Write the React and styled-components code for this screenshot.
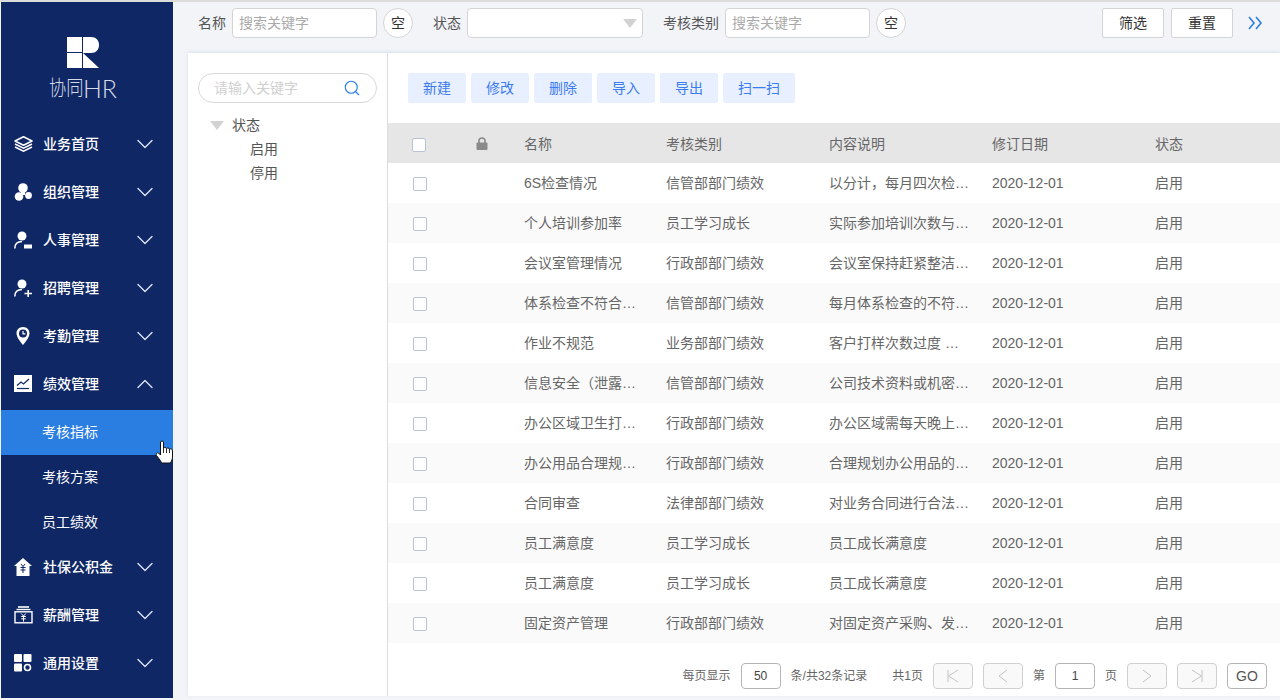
import React from "react";
import styled, { createGlobalStyle } from "styled-components";
import { ChevronDown, ChevronUp, Search } from "lucide-react";

const FONT = `"Liberation Sans", "Noto Sans CJK SC", sans-serif`;

const GlobalStyle = createGlobalStyle`
  html, body {
    margin: 0;
    padding: 0;
    height: 700px;
    overflow: hidden;
    background: #f2f4f8;
    font-family: ${FONT};
    line-height: 20px;
  }
  * { box-sizing: border-box; }
`;

const rows = [
  ["6S检查情况", "信管部部门绩效", "以分计，每月四次检…"],
  ["个人培训参加率", "员工学习成长", "实际参加培训次数与…"],
  ["会议室管理情况", "行政部部门绩效", "会议室保持赶紧整洁…"],
  ["体系检查不符合…", "信管部部门绩效", "每月体系检查的不符…"],
  ["作业不规范", "业务部部门绩效", "客户打样次数过度 …"],
  ["信息安全（泄露…", "信管部部门绩效", "公司技术资料或机密…"],
  ["办公区域卫生打…", "行政部部门绩效", "办公区域需每天晚上…"],
  ["办公用品合理规…", "行政部部门绩效", "合理规划办公用品的…"],
  ["合同审查", "法律部部门绩效", "对业务合同进行合法…"],
  ["员工满意度", "员工学习成长", "员工成长满意度"],
  ["员工满意度", "员工学习成长", "员工成长满意度"],
  ["固定资产管理", "行政部部门绩效", "对固定资产采购、发…"],
];

const IconLayers = () => (
  <svg width="20" height="16" viewBox="0 0 20 16" fill="none">
    <path d="M9.5 0.8 18 5 9.5 9.2 1 5Z" stroke="#fff" strokeWidth="1.6" strokeLinejoin="round" />
    <path d="M1 8 9.5 12.2 18 8M1 11 9.5 15.2 18 11" stroke="#fff" strokeWidth="1.5" />
  </svg>
);
const IconOrg = () => (
  <svg width="20" height="18" viewBox="0 0 20 18" fill="#fff">
    <circle cx="9" cy="5" r="4.8" />
    <circle cx="5" cy="13.5" r="4.3" />
    <circle cx="14.5" cy="12.5" r="3.4" />
    <rect x="7" y="8" width="4" height="4" />
  </svg>
);
const IconUserMinus = () => (
  <svg width="20" height="18" viewBox="0 0 20 18" fill="none">
    <circle cx="8" cy="5" r="4.5" fill="#fff" />
    <path d="M0.8 17.5C0.8 13 3.5 10.5 8 10.5" stroke="#fff" strokeWidth="1.5" />
    <rect x="10" y="13.5" width="8" height="4" fill="#fff" />
  </svg>
);
const IconUserPlus = () => (
  <svg width="20" height="18" viewBox="0 0 20 18" fill="none">
    <circle cx="8" cy="5" r="4.5" fill="#fff" />
    <path d="M0.8 17.5C0.8 13 3.5 10.5 8 10.5" stroke="#fff" strokeWidth="1.5" />
    <path d="M10.5 14.5H18M14.2 11V18" stroke="#fff" strokeWidth="1.6" />
  </svg>
);
const IconPin = () => (
  <svg width="20" height="18" viewBox="0 0 20 18">
    <path d="M9 0C4.6 0 2.5 3.2 2.5 6.3 2.5 10.5 7 15.5 9 18 11 15.5 15.5 10.5 15.5 6.3 15.5 3.2 13.4 0 9 0Z" fill="#fff" />
    <circle cx="9" cy="6.5" r="4" fill="#0f2765" />
    <path d="M9 4V6.8H11.4" stroke="#fff" strokeWidth="1.2" fill="none" />
  </svg>
);
const IconChart = () => (
  <svg width="20" height="18" viewBox="0 0 20 18">
    <rect x="0" y="0" width="18" height="17" fill="#fff" />
    <path d="M3 10.5 7 7 9.5 9 15 4" stroke="#0f2765" strokeWidth="1.2" fill="none" />
    <path d="M3 13.5H15" stroke="#0f2765" strokeWidth="1.2" />
  </svg>
);
const IconHouse = () => (
  <svg width="20" height="18" viewBox="0 0 20 18">
    <path d="M9 0 18 8H15.5V18H2.5V8H0Z" fill="#fff" />
    <path d="M7 6 9 8.5 11 6M6.5 9.5H11.5M6.5 12H11.5M9 8.5V15" stroke="#0f2765" strokeWidth="1" fill="none" />
  </svg>
);
const IconSalary = () => (
  <svg width="20" height="18" viewBox="0 0 20 18" fill="none">
    <path d="M4 1H15" stroke="#fff" strokeWidth="1.6" />
    <path d="M2.5 3.5H16.5" stroke="#fff" strokeWidth="1.4" />
    <rect x="1" y="5.8" width="17" height="11" stroke="#fff" strokeWidth="1.4" />
    <path d="M7.2 7.5 9.5 10 11.8 7.5M7.2 10.5H11.8M7.2 12.8H11.8M9.5 10V15.5" stroke="#fff" strokeWidth="1" />
  </svg>
);
const IconGrid = () => (
  <svg width="20" height="18" viewBox="0 0 20 18">
    <rect x="0" y="0" width="8" height="8" rx="1" fill="#fff" />
    <rect x="9.5" y="0" width="8" height="8" rx="1" fill="#fff" />
    <rect x="0" y="9.5" width="8" height="8" rx="1" fill="#fff" />
    <circle cx="13.5" cy="13.5" r="3" fill="none" stroke="#fff" strokeWidth="1.6" />
  </svg>
);

const Logo = () => (
  <svg width="32" height="32" viewBox="0 0 32 32">
    <rect x="0" y="0" width="15" height="15" fill="#fff" />
    <rect x="0" y="16" width="15" height="15" fill="#fff" />
    <path d="M16 0H24C29 0 32 3.5 32 8S29 16 24 16H16Z" fill="#fff" />
    <path d="M16 16 32 31H16Z" fill="#fff" />
  </svg>
);

const HandCursor = () => (
  <svg width="19" height="24" viewBox="0 0 19 24">
    <path
      d="M5.5 2C5.5 0.7 8.5 0.7 8.5 2V8C9.5 7.2 11 7.4 11.5 8.5 12.5 7.6 14 8 14.5 9 15.5 8.5 17.5 9 17.5 11V17C17.5 19 16.5 21 15.5 23H6.5C6 21 4.5 19.5 1.5 15.5 0.5 14 2 12 3.5 13L5.5 15Z"
      fill="#fff"
      stroke="#111"
      strokeWidth="1"
    />
    <path d="M8.5 8V13M11.5 8.5V13M14.5 9V13" stroke="#111" strokeWidth="0.9" />
  </svg>
);

const LockIcon = () => (
  <svg width="12" height="13" viewBox="0 0 12 13">
    <path d="M3 6V3.8C3 2 4.3 1 6 1S9 2 9 3.8V6" fill="none" stroke="#8a8a8a" strokeWidth="1.6" />
    <rect x="0.5" y="5.5" width="11" height="7.5" rx="1" fill="#8a8a8a" />
  </svg>
);

const ExpandGlyph = () => (
  <svg width="15" height="14" viewBox="0 0 15 14" fill="none" stroke="#2b7de9" strokeWidth="1.6">
    <path d="M1 1 6 7 1 13M8 1 13 7 8 13" />
  </svg>
);

// the four pager arrows share one little drawing
const NavGlyph = ({ d }) => (
  <svg width="20" height="18" viewBox="0 0 20 18" fill="none" stroke="#c4c4c4" strokeWidth="1">
    <path d={d} />
  </svg>
);

const menuBefore = [
  { label: "业务首页", icon: <IconLayers /> },
  { label: "组织管理", icon: <IconOrg /> },
  { label: "人事管理", icon: <IconUserMinus /> },
  { label: "招聘管理", icon: <IconUserPlus /> },
  { label: "考勤管理", icon: <IconPin /> },
];
const menuAfter = [
  { label: "社保公积金", icon: <IconHouse /> },
  { label: "薪酬管理", icon: <IconSalary /> },
  { label: "通用设置", icon: <IconGrid /> },
];

export default function App() {
  return (
    <>
      <GlobalStyle />
      <Page>
        <Sidebar>
          <Brand>
            <Logo />
            <BrandName>
              <BrandCjk>协同</BrandCjk>
              <BrandLatin>HR</BrandLatin>
            </BrandName>
          </Brand>
          {menuBefore.map((m) => (
            <MenuItem key={m.label}>
              <MenuIcon>{m.icon}</MenuIcon>
              <MenuLabel>{m.label}</MenuLabel>
              <ChevronDown size={28} strokeWidth={1.2} />
            </MenuItem>
          ))}
          <MenuItem>
            <MenuIcon>
              <IconChart />
            </MenuIcon>
            <MenuLabel>绩效管理</MenuLabel>
            <ChevronUp size={28} strokeWidth={1.2} />
          </MenuItem>
          <SubMenu>
            <SubItem $active>
              考核指标
              <CursorSpot>
                <HandCursor />
              </CursorSpot>
            </SubItem>
            <SubItem>考核方案</SubItem>
            <SubItem>员工绩效</SubItem>
          </SubMenu>
          {menuAfter.map((m) => (
            <MenuItem key={m.label}>
              <MenuIcon>{m.icon}</MenuIcon>
              <MenuLabel>{m.label}</MenuLabel>
              <ChevronDown size={28} strokeWidth={1.2} />
            </MenuItem>
          ))}
        </Sidebar>

        <Main>
          <FilterBar>
            <FilterLabel>名称</FilterLabel>
            <FilterInput placeholder="搜索关键字" />
            <ClearButton>空</ClearButton>
            <FilterLabel $ml={20}>状态</FilterLabel>
            <SelectBox>
              <Caret />
            </SelectBox>
            <FilterLabel $ml={20}>考核类别</FilterLabel>
            <FilterInput placeholder="搜索关键字" />
            <ClearButton>空</ClearButton>
            <FilterActions>
              <PlainButton>筛选</PlainButton>
              <PlainButton>重置</PlainButton>
              <ExpandIcon>
                <ExpandGlyph />
              </ExpandIcon>
            </FilterActions>
          </FilterBar>

          <Content>
            <TreePanel>
              <TreeSearch>
                <TreeInput placeholder="请输入关键字" />
                <Search size={18} color="#2b7de9" strokeWidth={1.5} />
              </TreeSearch>
              <TreeRoot>
                <TreeCaret />
                状态
              </TreeRoot>
              <TreeLeaf>启用</TreeLeaf>
              <TreeLeaf>停用</TreeLeaf>
            </TreePanel>

            <TablePanel>
              <Toolbar>
                <ToolButton>新建</ToolButton>
                <ToolButton>修改</ToolButton>
                <ToolButton>删除</ToolButton>
                <ToolButton>导入</ToolButton>
                <ToolButton>导出</ToolButton>
                <ToolButton $wide>扫一扫</ToolButton>
              </Toolbar>

              <HeadRow>
                <CheckCell>
                  <HeadCheck />
                </CheckCell>
                <LockCell>
                  <LockIcon />
                </LockCell>
                <Cell $w={142}>名称</Cell>
                <Cell $w={163}>考核类别</Cell>
                <Cell $w={163}>内容说明</Cell>
                <Cell $w={163}>修订日期</Cell>
                <Cell>状态</Cell>
              </HeadRow>
              {rows.map((r, i) => (
                <Row key={i} $odd={i % 2 === 1}>
                  <CheckCell>
                    <Check />
                  </CheckCell>
                  <LockCell />
                  <Cell $w={142}>{r[0]}</Cell>
                  <Cell $w={163}>{r[1]}</Cell>
                  <Cell $w={163}>{r[2]}</Cell>
                  <Cell $w={163}>2020-12-01</Cell>
                  <Cell>启用</Cell>
                </Row>
              ))}

              <Pager>
                <PagerText>每页显示</PagerText>
                <PageBox $mx={10}>50</PageBox>
                <PagerText>条/共32条记录</PagerText>
                <PagerText $ml={25}>共1页</PagerText>
                <PageNav $ml={10}>
                  <NavGlyph d="M5 3V15M15 3 5.5 9 15 15" />
                </PageNav>
                <PageNav $ml={10}>
                  <NavGlyph d="M14 3 6 9 14 15" />
                </PageNav>
                <PagerText $ml={10}>第</PagerText>
                <PageBox $mx={10}>1</PageBox>
                <PagerText>页</PagerText>
                <PageNav $ml={10}>
                  <NavGlyph d="M6 3 14 9 6 15" />
                </PageNav>
                <PageNav $ml={10}>
                  <NavGlyph d="M15 3V15M5 3 14.5 9 5 15" />
                </PageNav>
                <GoButton>GO</GoButton>
              </Pager>
            </TablePanel>
          </Content>
        </Main>
      </Page>
    </>
  );
}

const Page = styled.div`
  display: flex;
  width: 1280px;
  height: 700px;
  border-top: 2px solid #dcdcdc;
  padding-left: 1px;
  overflow: hidden;
`;

const Sidebar = styled.aside`
  width: 172px;
  height: 696px;
  background: #0f2765;
  color: #fff;
  flex-shrink: 0;
`;

const Brand = styled.div`
  height: 118px;
  padding: 35px 8px 0 0;
  display: flex;
  flex-direction: column;
  align-items: center;
`;

const BrandName = styled.div`
  display: flex;
  align-items: center;
  height: 24px;
  margin-top: 7px;
  color: #d5dae6;
  white-space: nowrap;
`;

const BrandCjk = styled.span`
  width: 34px;
  font-size: 21px;
  font-weight: 300;
  transform: scaleX(0.82);
  transform-origin: left center;
`;

const BrandLatin = styled.span`
  font-family: Lato, "Liberation Sans", sans-serif;
  font-size: 25px;
  font-weight: 300;
`;

const MenuItem = styled.div`
  display: flex;
  align-items: center;
  height: 48px;
  padding-left: 13px;
  color: #dfe3ee;
  font-size: 14px;
  svg {
    flex-shrink: 0;
  }
`;

const MenuIcon = styled.span`
  width: 29px;
  display: flex;
  align-items: center;
`;

const MenuLabel = styled.span`
  width: 88px;
  font-weight: 500;
  color: #fff;
`;

const SubMenu = styled.div`
  margin: 2px 0 -2px;
`;

const SubItem = styled.div`
  position: relative;
  height: 45px;
  line-height: 45px;
  padding-left: 41px;
  font-size: 14px;
  color: #fff;
  background: ${(p) => (p.$active ? "#2a7de1" : "transparent")};
`;

const CursorSpot = styled.span`
  position: absolute;
  left: 154px;
  top: 30px;
  line-height: 0;
  z-index: 2;
`;

const Main = styled.main`
  flex: 1;
  min-width: 0;
  display: flex;
  flex-direction: column;
`;

const FilterBar = styled.div`
  height: 51px;
  display: flex;
  align-items: center;
  padding: 0 0 9px 25px;
  font-size: 14px;
  color: #555;
`;

const FilterLabel = styled.span`
  margin-left: ${(p) => p.$ml || 0}px;
  margin-right: 6px;
  color: #555;
  white-space: nowrap;
`;

const FilterInput = styled.input`
  width: 145px;
  height: 30px;
  border: 1px solid #d4d4d4;
  border-radius: 4px;
  padding: 0 6px;
  font: 14px ${FONT};
  background: #fff;
  outline: none;
  &::placeholder {
    color: #aaa;
  }
`;

const ClearButton = styled.span`
  width: 30px;
  height: 30px;
  margin-left: 6px;
  border: 1px solid #d4d4d4;
  border-radius: 50%;
  background: #fff;
  color: #333;
  display: flex;
  align-items: center;
  justify-content: center;
  font-size: 14px;
`;

const SelectBox = styled.div`
  width: 176px;
  height: 30px;
  background: #fff;
  border: 1px solid #d4d4d4;
  border-radius: 4px;
  display: flex;
  align-items: center;
  justify-content: flex-end;
  padding-right: 5px;
`;

const Caret = styled.span`
  width: 0;
  height: 0;
  border-left: 7px solid transparent;
  border-right: 7px solid transparent;
  border-top: 9px solid #d2d2d2;
`;

const FilterActions = styled.div`
  margin-left: auto;
  display: flex;
  align-items: center;
  gap: 7px;
  padding-right: 17px;
`;

const PlainButton = styled.span`
  width: 62px;
  height: 30px;
  background: #fff;
  border: 1px solid #d4d4d4;
  border-radius: 2px;
  color: #333;
  display: flex;
  align-items: center;
  justify-content: center;
  font-size: 14px;
`;

const ExpandIcon = styled.span`
  display: flex;
  margin-left: 8px;
`;

const Content = styled.div`
  flex: 1;
  min-height: 0;
  margin-left: 15px;
  margin-bottom: 4px;
  display: flex;
  background: #fff;
  box-shadow: 0 -1px 3px rgba(190, 208, 232, 0.5);
`;

const TreePanel = styled.div`
  width: 200px;
  flex-shrink: 0;
  border-right: 1px solid #dcdcdc;
  padding: 20px 10px 0;
  font-size: 14px;
  color: #555;
`;

const TreeSearch = styled.div`
  height: 30px;
  width: 179px;
  border: 1px solid #d8d8d8;
  border-radius: 15px;
  display: flex;
  align-items: center;
  padding: 0 15px;
  justify-content: space-between;
`;

const TreeInput = styled.input`
  width: 120px;
  border: 0;
  outline: none;
  padding: 0;
  font: 14px ${FONT};
  &::placeholder {
    color: #d0d0d0;
  }
`;

const TreeRoot = styled.div`
  display: flex;
  align-items: center;
  height: 24px;
  margin-top: 10px;
  padding-left: 12px;
`;

const TreeCaret = styled.span`
  width: 0;
  height: 0;
  margin-right: 8px;
  border-left: 7px solid transparent;
  border-right: 7px solid transparent;
  border-top: 9px solid #d2d2d2;
`;

const TreeLeaf = styled.div`
  height: 24px;
  line-height: 24px;
  padding-left: 52px;
`;

const TablePanel = styled.div`
  flex: 1;
  min-width: 0;
  display: flex;
  flex-direction: column;
`;

const Toolbar = styled.div`
  height: 70px;
  padding: 20px 0 0 20px;
  display: flex;
  align-items: flex-start;
  gap: 5px;
`;

const ToolButton = styled.span`
  width: ${(p) => (p.$wide ? 72 : 58)}px;
  height: 30px;
  background: #e8efff;
  border-radius: 2px;
  color: #3b7cf0;
  font-size: 14px;
  display: flex;
  align-items: center;
  justify-content: center;
`;

const Row = styled.div`
  display: flex;
  align-items: center;
  height: 40px;
  font-size: 14px;
  color: #666;
  background: ${(p) => (p.$odd ? "#fafafa" : "#fff")};
`;

const HeadRow = styled(Row)`
  background: #e6e6e6;
  padding-top: 1px;
`;

const CheckCell = styled.div`
  width: 72px;
  padding-left: 25px;
  display: flex;
  align-items: center;
`;

const Check = styled.span`
  width: 14px;
  height: 14px;
  margin-top: 1px;
  border: 1px solid #b9c3d6;
  border-radius: 2px;
  background: #fff;
`;

const HeadCheck = styled(Check)`
  margin: 2px 0 0 -1px;
`;

const LockCell = styled.div`
  width: 64px;
  padding-left: 16px;
  display: flex;
  align-items: center;
`;

const Cell = styled.div`
  width: ${(p) => (p.$w ? `${p.$w}px` : "auto")};
  white-space: nowrap;
`;

const Pager = styled.div`
  flex: 1;
  display: flex;
  align-items: center;
  justify-content: flex-end;
  padding: 13px 13px 0 0;
  font-size: 12px;
  color: #555;
`;

const PagerText = styled.span`
  margin-left: ${(p) => p.$ml || 0}px;
  color: #666;
  white-space: nowrap;
`;

const PageBox = styled.span`
  width: 40px;
  height: 26px;
  margin: 0 ${(p) => p.$mx || 0}px;
  border: 1px solid #b5b5b5;
  border-radius: 4px;
  color: #444;
  display: flex;
  align-items: center;
  justify-content: center;
`;

const PageNav = styled.span`
  width: 40px;
  height: 26px;
  margin-left: ${(p) => p.$ml || 0}px;
  background: #f9f9f9;
  border: 1px solid #d0d0d0;
  border-radius: 4px;
  display: flex;
  align-items: center;
  justify-content: center;
`;

const GoButton = styled.span`
  width: 40px;
  height: 26px;
  margin-left: 10px;
  border: 1px solid #b5b5b5;
  border-radius: 4px;
  color: #555;
  font-size: 14px;
  display: flex;
  align-items: center;
  justify-content: center;
`;
